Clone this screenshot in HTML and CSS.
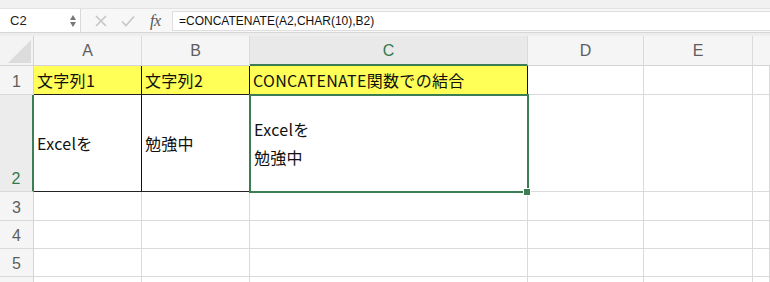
FILE: index.html
```html
<!DOCTYPE html>
<html lang="ja">
<head>
<meta charset="utf-8">
<link rel="stylesheet" href="styles.css">
</head>
<body>
<div class="app">
  <div class="topstrip"></div>
  <div class="fbar">
    <div class="namebox">
      <span class="nb-text">C2</span>
      <span class="spin"><span class="up"></span><span class="down"></span></span>
    </div>
    <div class="fbtns">
      <svg class="ic-x" width="14" height="14" viewBox="0 0 14 14"><path d="M2 2 L12 12 M12 2 L2 12" stroke="#c6c6c6" stroke-width="1.6" fill="none"/></svg>
      <svg class="ic-ok" width="16" height="14" viewBox="0 0 16 14"><path d="M2 7.5 L6 11.5 L14 2.5" stroke="#c6c6c6" stroke-width="1.6" fill="none"/></svg>
      <span class="fx">fx</span>
    </div>
    <div class="finput">=CONCATENATE(A2,CHAR(10),B2)</div>
  </div>
  <div class="gap"></div>
  <div class="sheet">
    <div class="corner"><svg width="34" height="30" viewBox="0 0 34 30"><polygon points="8,27 31,27 31,4" fill="#dcdcdc"/></svg></div>
    <div class="ch">A</div>
    <div class="ch">B</div>
    <div class="ch sel">C</div>
    <div class="ch">D</div>
    <div class="ch">E</div>
    <div class="ch last"></div>

    <div class="rh">1</div>
    <div class="c y bk">文字列1</div>
    <div class="c y bk">文字列2</div>
    <div class="c y bk">CONCATENATE関数での結合</div>
    <div class="c"></div>
    <div class="c"></div>
    <div class="c"></div>

    <div class="rh rsel">2</div>
    <div class="c bk mid">Excelを</div>
    <div class="c bk mid">勉強中</div>
    <div class="c mid two"><span>Excelを</span><span>勉強中</span></div>
    <div class="c"></div>
    <div class="c"></div>
    <div class="c"></div>

    <div class="rh">3</div>
    <div class="c"></div><div class="c"></div><div class="c"></div><div class="c"></div><div class="c"></div><div class="c"></div>
    <div class="rh">4</div>
    <div class="c"></div><div class="c"></div><div class="c"></div><div class="c"></div><div class="c"></div><div class="c"></div>
    <div class="rh">5</div>
    <div class="c"></div><div class="c"></div><div class="c"></div><div class="c"></div><div class="c"></div><div class="c"></div>
    <div class="rh"></div>
    <div class="c"></div><div class="c"></div><div class="c"></div><div class="c"></div><div class="c"></div><div class="c"></div>

    <div class="selbox"></div>
    <div class="handle"></div>
  </div>
</div>
</body>
</html>
```
FILE: styles.css
```css
* { box-sizing: border-box; }
html, body { margin: 0; padding: 0; background: #fff; }
body { width: 770px; height: 282px; overflow: hidden; }
.app { width: 770px; height: 282px; display: flex; flex-direction: column; }

.topstrip { height: 9px; background: #f1f1f1; border-bottom: 1px solid #e2e2e2; }

.fbar { height: 24px; display: flex; align-items: center; background: #f7f7f7; border-bottom: 1px solid #d6d6d6; }
.namebox { width: 81px; height: 100%; background: #fff; border-right: 1px solid #d9d9d9; display: flex; align-items: center; justify-content: space-between; padding: 0 4px 0 10px; }
.nb-text { font: 13px "Liberation Sans", Arial, sans-serif; color: #222; }
.spin { display: flex; flex-direction: column; gap: 2px; }
.spin .up { width: 0; height: 0; border-left: 3.5px solid transparent; border-right: 3.5px solid transparent; border-bottom: 5px solid #777; }
.spin .down { width: 0; height: 0; border-left: 3.5px solid transparent; border-right: 3.5px solid transparent; border-top: 5px solid #777; }

.fbtns { width: 91px; display: flex; align-items: center; padding-left: 13px; }
.ic-x { margin-right: 12px; }
.ic-ok { margin-right: 14px; }
.fx { font: italic 16px "Liberation Serif", "Times New Roman", serif; color: #555; letter-spacing: -0.5px; }

.finput { flex: 1; height: 20px; background: #fff; border: 1px solid #dedede; border-right: none; font: 12px "Liberation Sans", Arial, sans-serif; color: #111; padding-left: 6px; line-height: 18px; }

.gap { height: 3px; background: #ededed; }

.sheet { position: relative; flex: 1; display: grid; grid-template-columns: 34px 108px 108px 278px 116px 109px 17px; grid-template-rows: 30px 29px 97px 29px 28px 28px 30px; overflow: hidden; }

.corner { background: #f3f3f3; border-right: 1px solid #d4d4d4; border-bottom: 1px solid #d4d4d4; }
.corner svg { display: block; }
.ch { background: #f5f5f5; border-right: 1px solid #dadada; border-bottom: 1px solid #d4d4d4; display: flex; align-items: center; justify-content: center; font: 16px "Liberation Sans", Arial, sans-serif; color: #5e5e5e; padding-top: 1px; }
.ch.sel { background: #e9e9e9; color: #2f7a4c; border-bottom: 2px solid #3c7d54; }
.ch.last { border-right: none; }

.rh { background: #f5f5f5; border-right: 1px solid #d4d4d4; border-bottom: 1px solid #dadada; display: flex; align-items: flex-end; justify-content: center; padding-bottom: 3px; font: 16px "Liberation Sans", Arial, sans-serif; color: #5e5e5e; }
.rh.rsel { color: #2f7a4c; border-right: 2px solid #3c7d54; background: #ececec; }

.c { border-right: 1px solid #dadada; border-bottom: 1px solid #dadada; font: 16px "Noto Sans CJK JP", "Noto Sans", sans-serif; letter-spacing: 0.3px; color: #111; display: flex; align-items: center; padding-left: 3px; white-space: nowrap; }
.c.y { background: #ffff57; }
.c.bk { border-right-color: #111; border-bottom-color: #222; }
.c.two { flex-direction: column; align-items: flex-start; justify-content: center; line-height: 28px; padding-left: 4px; }

.selbox { position: absolute; left: 249px; top: 58px; width: 280px; height: 99px; border: 2px solid #3c7d54; pointer-events: none; }
.handle { position: absolute; left: 523px; top: 152px; width: 8px; height: 8px; background: #3c7d54; border: 1px solid #fff; }
```
